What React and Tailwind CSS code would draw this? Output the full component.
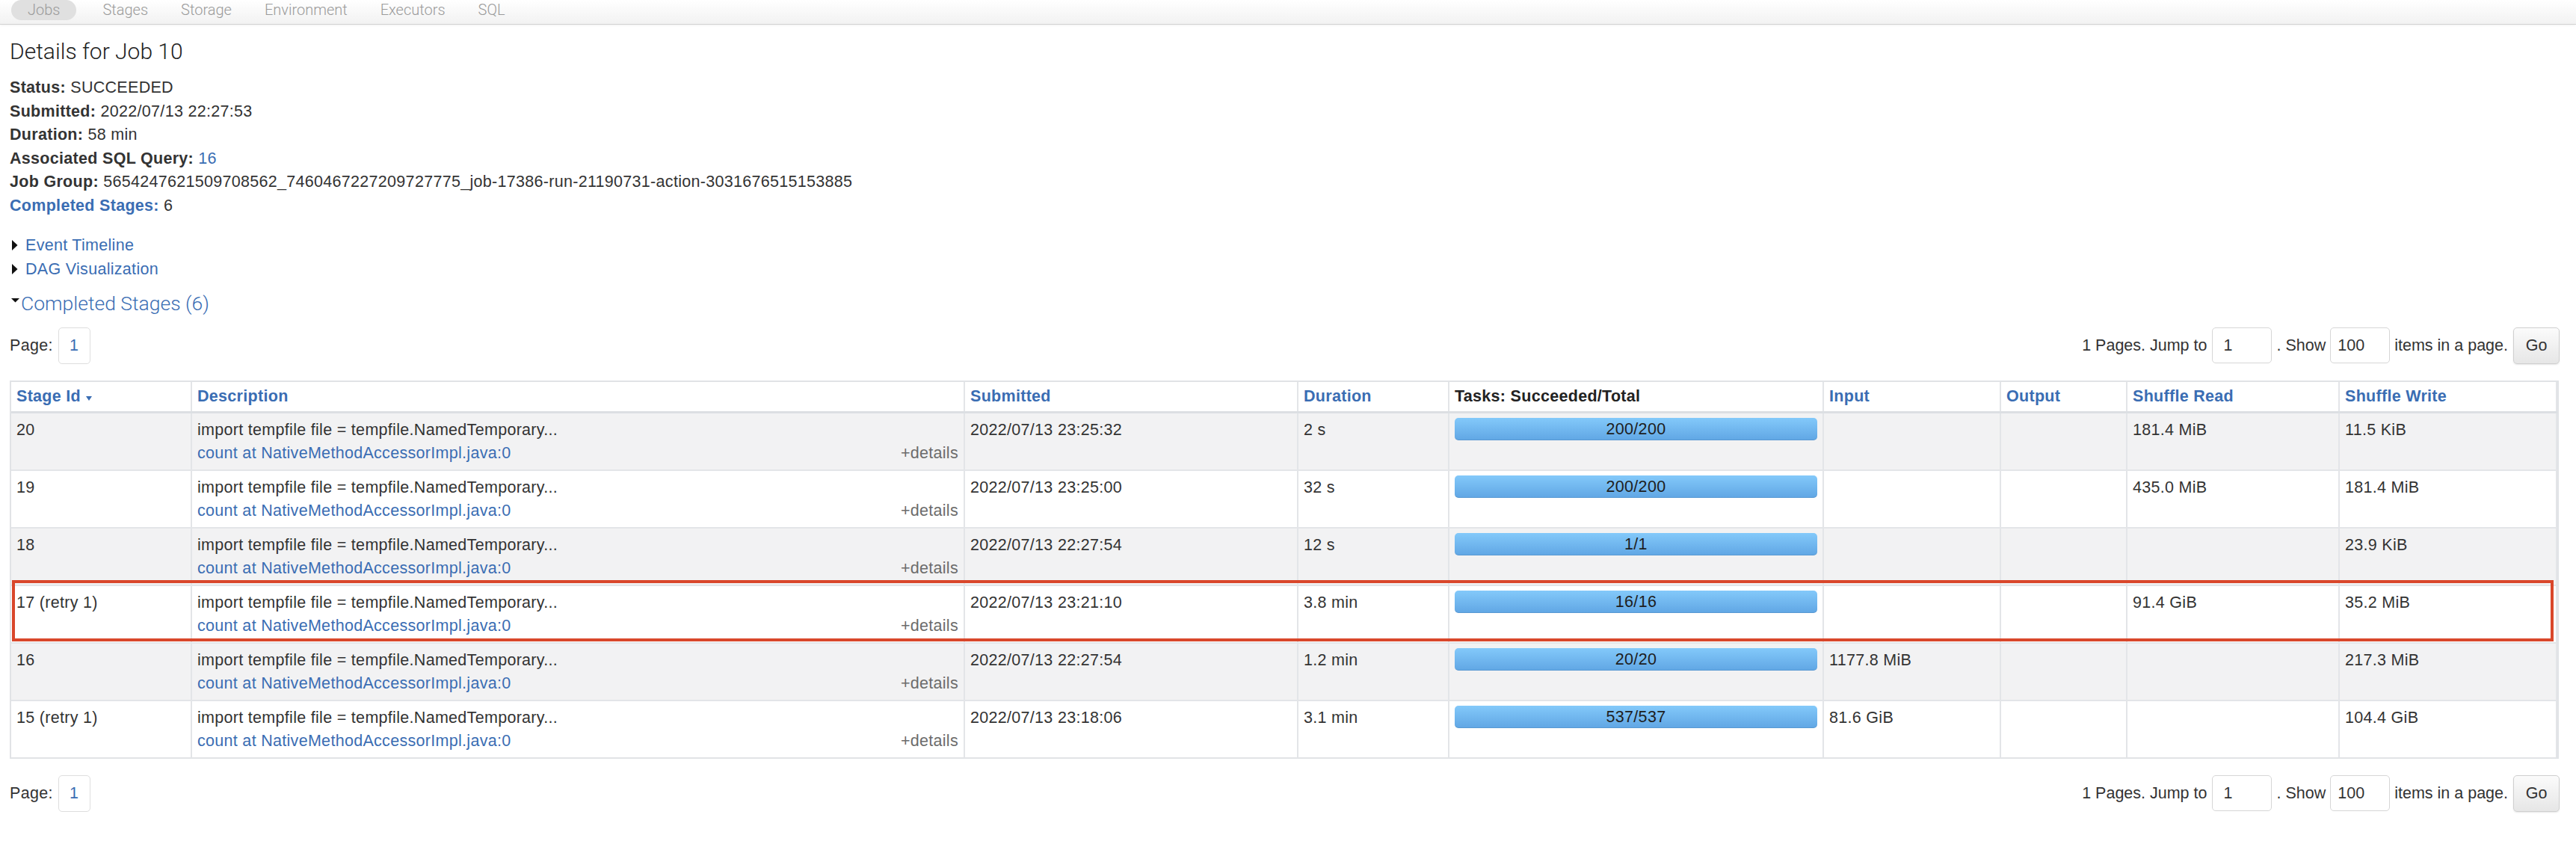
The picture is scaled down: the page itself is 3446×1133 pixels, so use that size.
const BLUE = "text-[#3a6db3]";

const rows = [
  { id: "20", sub: "2022/07/13 23:25:32", dur: "2 s", tasks: "200/200", input: "", output: "", sr: "181.4 MiB", sw: "11.5 KiB" },
  { id: "19", sub: "2022/07/13 23:25:00", dur: "32 s", tasks: "200/200", input: "", output: "", sr: "435.0 MiB", sw: "181.4 MiB" },
  { id: "18", sub: "2022/07/13 22:27:54", dur: "12 s", tasks: "1/1", input: "", output: "", sr: "", sw: "23.9 KiB" },
  { id: "17 (retry 1)", sub: "2022/07/13 23:21:10", dur: "3.8 min", tasks: "16/16", input: "", output: "", sr: "91.4 GiB", sw: "35.2 MiB" },
  { id: "16", sub: "2022/07/13 22:27:54", dur: "1.2 min", tasks: "20/20", input: "1177.8 MiB", output: "", sr: "", sw: "217.3 MiB" },
  { id: "15 (retry 1)", sub: "2022/07/13 23:18:06", dur: "3.1 min", tasks: "537/537", input: "81.6 GiB", output: "", sr: "", sw: "104.4 GiB" },
];

const GRID = "grid grid-cols-[242px_1034px_446px_202px_501px_237px_169px_284px_291px]";

function Pagination() {
  return (
    <div className="flex items-center justify-between h-[49px]">
      <div className="flex items-center">
        <span>Page:</span>
        <span className={`ml-[7px] w-[43px] h-[49px] flex items-center justify-center border border-[#dedede] rounded-[5px] ${BLUE}`}>1</span>
      </div>
      <div className="flex items-center tracking-normal">
        <span>1 Pages. Jump to</span>
        <span className="ml-[7px] w-[80px] h-[48px] flex items-center pl-[14px] border border-[#d6d6d6] rounded-[5px]">1</span>
        <span className="ml-[6px]">. Show</span>
        <span className="ml-[6px] w-[80px] h-[48px] flex items-center pl-[9px] border border-[#d6d6d6] rounded-[5px]">100</span>
        <span className="ml-[6px]">items in a page.</span>
        <span className="ml-[7px] w-[62px] h-[49px] flex items-center justify-center border border-[#cfcfcf] rounded-[5px] bg-linear-to-b from-[#fbfbfb] to-[#e6e6e6] shadow-[0_1px_2px_rgba(0,0,0,0.1)] text-[#333]">Go</span>
      </div>
    </div>
  );
}

function RightTri() {
  return (
    <svg width="8" height="14" viewBox="0 0 8 14" className="shrink-0">
      <polygon points="0,0 7.5,7 0,14" fill="#111" />
    </svg>
  );
}

export default function App() {
  const cell = "border-r-2 border-[#e3e5e8] px-[7px] pt-[7px] leading-[31px]";
  const head = "border-r-2 border-[#e3e5e8] px-[7px] pt-[4px] leading-[31px] font-bold";
  return (
    <div className="min-h-[1133px] bg-white text-[#333] text-[21.5px] tracking-[0.3px] font-['Liberation_Sans',Arial,sans-serif]">
      <nav className="h-[33px] border-b border-[#d2d2d2] bg-linear-to-b from-white to-[#f2f2f2] flex items-start pl-[15px] shadow-[0_1px_3px_rgba(0,0,0,0.06)] font-['Roboto',sans-serif] font-light text-[20px] tracking-normal">
        <div className="h-[27px] px-[22px] rounded-full bg-[#e0e0e0] text-[#9a9a9a] leading-[27px] mr-[13px]">Jobs</div>
        {["Stages", "Storage", "Environment", "Executors", "SQL"].map((t) => (
          <div key={t} className="h-[27px] px-[22px] leading-[27px] text-[#9a9a9a]">{t}</div>
        ))}
      </nav>

      <div className="pl-[13px] w-[3424px]">
        <h3 className="mt-[17px] text-[30px] leading-[38px] font-['Roboto',sans-serif] font-light text-[#222] tracking-normal">Details for Job 10</h3>

        <ul className="mt-[14px] leading-[31.6px]">
          <li><strong>Status:</strong> SUCCEEDED</li>
          <li><strong>Submitted:</strong> 2022/07/13 22:27:53</li>
          <li><strong>Duration:</strong> 58 min</li>
          <li><strong>Associated SQL Query:</strong> <span className={BLUE}>16</span></li>
          <li><strong>Job Group:</strong> 5654247621509708562_7460467227209727775_job-17386-run-21190731-action-3031676515153885</li>
          <li><strong className={BLUE}>Completed Stages:</strong> 6</li>
        </ul>

        <div className="mt-[20px] leading-[32px]">
          <div className="flex items-center pl-[3px] gap-[10px]"><RightTri /><span className={BLUE}>Event Timeline</span></div>
          <div className="flex items-center pl-[3px] gap-[10px]"><RightTri /><span className={BLUE}>DAG Visualization</span></div>
        </div>

        <div className="mt-[14px] flex items-start h-[32px]">
          <svg width="11" height="6" viewBox="0 0 11 6" className="mt-[9px] ml-[2px] shrink-0">
            <polygon points="0,0 11,0 5.5,5.5" fill="#111" />
          </svg>
          <span className={`ml-[2px] text-[26.5px] leading-[32px] font-['Roboto',sans-serif] font-light tracking-normal ${BLUE}`}>Completed Stages (6)</span>
        </div>

        <div className="mt-[16px]"><Pagination /></div>

        <div className="mt-[22px] w-[3410px] border-2 border-[#e1e3e6] relative">
          <div className={`${GRID} h-[42px] border-b-[3px] border-[#dcdfe3] bg-white`}>
            <div className={`${head} ${BLUE} flex items-start gap-[7px]`}>
              <span>Stage Id</span>
              <svg width="8" height="6" viewBox="0 0 8 6" className="mt-[15px]"><polygon points="0,0 8,0 4,6" fill="#3a6db3" /></svg>
            </div>
            <div className={`${head} ${BLUE}`}>Description</div>
            <div className={`${head} ${BLUE}`}>Submitted</div>
            <div className={`${head} ${BLUE}`}>Duration</div>
            <div className={`${head} text-[#222]`}>Tasks: Succeeded/Total</div>
            <div className={`${head} ${BLUE}`}>Input</div>
            <div className={`${head} ${BLUE}`}>Output</div>
            <div className={`${head} ${BLUE}`}>Shuffle Read</div>
            <div className={`${head} ${BLUE} border-r-0`}>Shuffle Write</div>
          </div>

          {rows.map((r, i) => {
            const last = i === rows.length - 1;
            return (
              <div
                key={r.id}
                className={`${GRID} ${last ? "h-[75px]" : "h-[77px] border-b-2 border-[#e3e5e8]"} ${i % 2 === 0 ? "bg-[#f2f2f3]" : "bg-white"}`}
              >
                <div className={cell}>{r.id}</div>
                <div className={cell}>
                  <div>import tempfile file = tempfile.NamedTemporary...</div>
                  <div className="flex justify-between">
                    <span className={BLUE}>count at NativeMethodAccessorImpl.java:0</span>
                    <span className="text-[#6c6c6c]">+details</span>
                  </div>
                </div>
                <div className={cell}>{r.sub}</div>
                <div className={cell}>{r.dur}</div>
                <div className="border-r-2 border-[#e3e5e8] px-[7px] pt-[6px]">
                  <div className="h-[30px] rounded-[5px] bg-linear-to-b from-[#83c9fa] to-[#60a6e4] shadow-[inset_0_-1px_0_rgba(0,0,0,0.08)] text-center leading-[30px] text-[#1e1e1e]">
                    {r.tasks}
                  </div>
                </div>
                <div className={cell}>{r.input}</div>
                <div className={cell}>{r.output}</div>
                <div className={cell}>{r.sr}</div>
                <div className={`${cell} border-r-0`}>{r.sw}</div>
              </div>
            );
          })}

          <div className="absolute left-[1px] top-[265px] w-[3400px] h-[82px] border-4 border-[#d9472b] pointer-events-none" />
        </div>

        <div className="mt-[22px]"><Pagination /></div>
      </div>
    </div>
  );
}
